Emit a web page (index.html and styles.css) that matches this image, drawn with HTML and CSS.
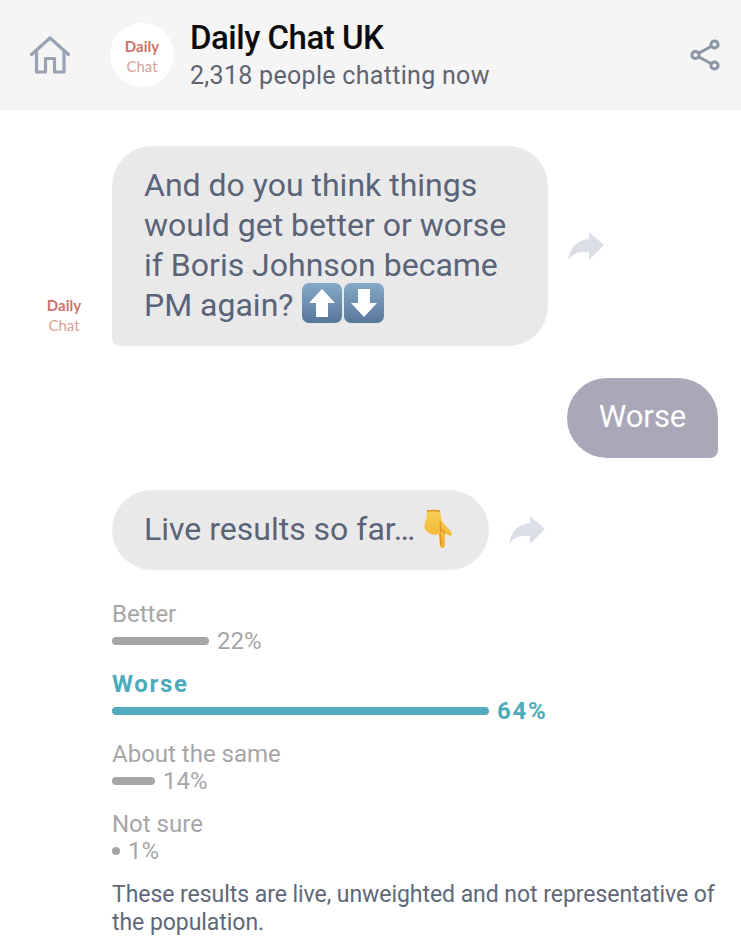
FILE: index.html
```html
<!DOCTYPE html>
<html lang="en">
<head>
  <meta charset="UTF-8">
  <title>Daily Chat UK</title>
  <link rel="stylesheet" href="styles.css">
</head>
<body>
  <header class="topbar">
    <svg class="home-icon" viewBox="0 0 40 38" fill="none" stroke="#98a2b3" stroke-width="3.200" stroke-linejoin="round" stroke-linecap="round">
      <path d="M1.500 18.500 20 2l18.500 16.500"/>
      <path d="M6.500 16v20h9V22.500h9V36h9.500V16"/>
    </svg>
    <div class="logo logo-round">
      <span class="logo-daily">Daily</span>
      <span class="logo-chat">Chat</span>
    </div>
    <div class="titles">
      <div class="title">Daily Chat UK</div>
      <div class="subtitle">2,318 people chatting now</div>
    </div>
    <svg class="share-icon" viewBox="0 0 30 32" fill="none" stroke="#8c95a5" stroke-width="3">
      <circle cx="5.500" cy="16" r="3.600"/>
      <circle cx="24.500" cy="5.500" r="3.600"/>
      <circle cx="24.500" cy="26.500" r="3.600"/>
      <path d="M9 14 21 7.500M9 18l12 6.500"/>
    </svg>
  </header>

  <main class="chat">
    <div class="row">
      <div class="logo logo-side">
        <span class="logo-daily">Daily</span>
        <span class="logo-chat">Chat</span>
      </div>
      <div class="bubble bubble-in bubble-question">
        And do you think things would get better or worse if Boris Johnson became PM again?
        <span class="emoji-pair">
          <svg class="key" viewBox="0 0 40 40"><defs><linearGradient id="keyfill" x1="0" y1="0" x2="0" y2="1"><stop offset="0" stop-color="#86a9c8"/><stop offset="1" stop-color="#57779a"/></linearGradient></defs><rect width="40" height="40" rx="7" fill="url(#keyfill)"/><path d="M20 6 33 20h-7v14H14V20H7z" fill="#fff"/></svg>
          <svg class="key" viewBox="0 0 40 40"><rect width="40" height="40" rx="7" fill="url(#keyfill)"/><path d="M20 34 33 20h-7V6H14v14H7z" fill="#fff"/></svg>
        </span>
      </div>
      <svg class="forward" viewBox="0 0 36 30"><path d="M21 1 36 14 21 29v-8C12 20 5 22 0 29 2 17 9 9 21 8z" fill="#dcdee8"/></svg>
    </div>

    <div class="row row-out">
      <div class="bubble bubble-out">Worse</div>
    </div>

    <div class="row row-results">
      <div class="bubble bubble-in bubble-live">
        Live results so far…
        <svg class="hand" viewBox="0 0 30 40">
          <defs><linearGradient id="handfill" x1="0" y1="0" x2="0" y2="1"><stop offset="0" stop-color="#f8cf55"/><stop offset="1" stop-color="#f0b030"/></linearGradient></defs>
          <path d="M3 1.500Q9 .5 16 1.500L18 12l9.500 11.500q1 2-1 3.500L21 24.500 20.800 37q-.3 2-2.300 2T16 37l-1-12q-4 1.500-8 0-5-2-6.500-6Q0 14 2.500 9z" fill="url(#handfill)"/>
          <path d="M3 2q6.500-1 13 0" stroke="#dc9428" stroke-width="1.600" fill="none"/>
          <path d="M16 12q1 7 .5 12M21 24.500 18 20M16.800 36l-.8-11" stroke="#d98f24" stroke-width="1.200" fill="none"/>
        </svg>
      </div>
      <svg class="forward" viewBox="0 0 36 30"><path d="M21 1 36 14 21 29v-8C12 20 5 22 0 29 2 17 9 9 21 8z" fill="#dcdee8"/></svg>
    </div>

    <section class="poll">
      <div class="option">
        <div class="option-label">Better</div>
        <div class="option-result"><span class="bar" style="width: 97px"></span><span>22%</span></div>
      </div>
      <div class="option option-picked">
        <div class="option-label">Worse</div>
        <div class="option-result"><span class="bar" style="width: 377px"></span><span>64%</span></div>
      </div>
      <div class="option">
        <div class="option-label">About the same</div>
        <div class="option-result"><span class="bar" style="width: 43px"></span><span>14%</span></div>
      </div>
      <div class="option">
        <div class="option-label">Not sure</div>
        <div class="option-result"><span class="bar" style="width: 8px"></span><span>1%</span></div>
      </div>
    </section>

    <p class="note">These results are live, unweighted and not representative of the population.</p>
  </main>
</body>
</html>
```

FILE: styles.css
```css
* {
  box-sizing: border-box;
}

body {
  margin: 0;
  font-family: Roboto, "Liberation Sans", sans-serif;
  background: #fff;
  overflow: hidden;
}

.topbar {
  display: flex;
  align-items: center;
  height: 110px;
  padding: 0 21px 0 30px;
  background: #f5f5f5;
}

.home-icon {
  width: 40px;
  height: 38px;
  margin-right: 40px;
}

.logo {
  display: flex;
  flex-direction: column;
  align-items: center;
  font-family: Lato, "Open Sans", sans-serif;
  line-height: 20px;
}

.logo-round {
  justify-content: center;
  width: 64px;
  height: 64px;
  margin-right: 16px;
  padding-top: 2px;
  border-radius: 50%;
  background: #fff;
  font-size: 15px;
}

.logo-daily {
  font-weight: 700;
  color: #cf7268;
}

.logo-chat {
  color: #d99f98;
}

.titles {
  flex: 1;
  padding-top: 1px;
}

.title {
  font-size: 33px;
  line-height: 36px;
  font-weight: 500;
  letter-spacing: -0.5px;
  color: #0c0c0c;
}

.subtitle {
  margin-top: 5px;
  font-size: 25px;
  line-height: 30px;
  letter-spacing: 0.3px;
  color: #5f6470;
}

.share-icon {
  width: 30px;
  height: 32px;
}

.chat {
  padding: 36px 23px 0 46px;
}

.row {
  display: flex;
  align-items: center;
}

.row-out {
  justify-content: flex-end;
  margin-top: 32px;
}

.row-results {
  margin-top: 32px;
  margin-left: 66px;
}

.logo-side {
  align-self: flex-end;
  width: 36px;
  margin: 0 30px 11px 0;
  font-size: 15px;
}

.bubble {
  font-size: 32px;
  line-height: 40px;
  padding: 19px 32px 21px;
  border-radius: 40px;
}

.bubble-in {
  background: #e9e9e9;
  color: #5a6478;
}

.bubble-question {
  width: 436px;
  border-bottom-left-radius: 8px;
}

.bubble-live {
  width: 377px;
  white-space: nowrap;
}

.bubble-out {
  width: 151px;
  padding-left: 0;
  padding-right: 0;
  font-size: 31px;
  background: #aaa7b8;
  color: #fff;
  border-bottom-right-radius: 8px;
  text-align: center;
}

.emoji-pair {
  display: inline-flex;
  gap: 2px;
  height: 28px;
  margin-left: 1px;
  vertical-align: -7px;
}

.key {
  flex: none;
  width: 40px;
  height: 40px;
  margin-top: -6px;
}

.hand {
  width: 30px;
  height: 40px;
  margin: -10px 0 -10px 1px;
  vertical-align: 1px;
}

.forward {
  width: 36px;
  height: 30px;
  margin-left: 20px;
}

.poll {
  margin: 31px 0 0 66px;
}

.option {
  margin-bottom: 17px;
  color: #a6a6a6;
  font-size: 24px;
}

.option-label {
  line-height: 27px;
}

.option-result {
  display: flex;
  align-items: center;
  gap: 8px;
  line-height: 26px;
}

.bar {
  height: 8px;
  border-radius: 4px;
  background: #a6a6a6;
}

.option-picked {
  color: #4fabbb;
  font-weight: 700;
  letter-spacing: 1.7px;
}

.option-picked .bar {
  background: #52abbc;
}

.note {
  margin: 7px 0 0 66px;
  font-size: 23px;
  line-height: 28px;
  letter-spacing: -0.05px;
  color: #5f6878;
}
```
